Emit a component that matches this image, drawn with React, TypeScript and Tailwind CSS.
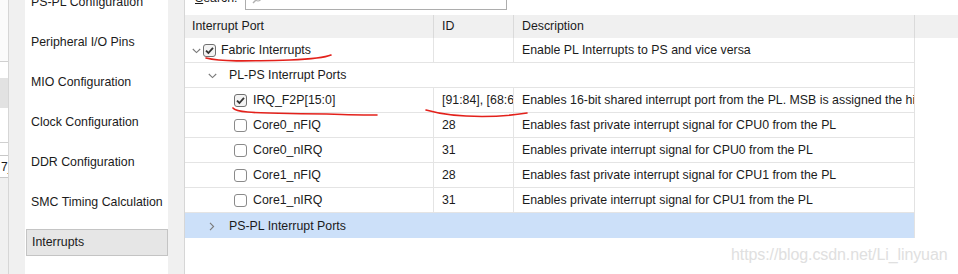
import React from "react";

const ChevDown = () => (
  <svg width="9" height="6" viewBox="0 0 9 6" className="shrink-0">
    <path d="M0.8 1 L4.5 4.6 L8.2 1" fill="none" stroke="#7a7a7a" strokeWidth="1.1" />
  </svg>
);

const ChevRight = () => (
  <svg width="6" height="9" viewBox="0 0 6 9" className="shrink-0">
    <path d="M1 0.8 L4.6 4.5 L1 8.2" fill="none" stroke="#7a7a7a" strokeWidth="1.1" />
  </svg>
);

const Check = ({ on }: { on: boolean }) => (
  <div
    className={`w-[13px] h-[13px] shrink-0 rounded-[3px] border flex items-center justify-center ${
      on ? "border-[#707070] bg-[#f3f3f3]" : "border-[#8a8a8a] bg-white"
    }`}
  >
    {on && (
      <svg width="11" height="11" viewBox="0 0 11 11">
        <path d="M2 5.6 L4.4 8 L9 2.8" fill="none" stroke="#333" strokeWidth="1.8" />
      </svg>
    )}
  </div>
);

const side = [
  "PS-PL Configuration",
  "Peripheral I/O Pins",
  "MIO Configuration",
  "Clock Configuration",
  "DDR Configuration",
  "SMC Timing Calculation",
  "Interrupts",
];

const leaves = [
  { name: "IRQ_F2P[15:0]", on: true, id: "[91:84], [68:61]", desc: "Enables 16-bit shared interrupt port from the PL. MSB is assigned the highest ID" },
  { name: "Core0_nFIQ", on: false, id: "28", desc: "Enables fast private interrupt signal for CPU0 from the PL" },
  { name: "Core0_nIRQ", on: false, id: "31", desc: "Enables private interrupt signal for CPU0 from the PL" },
  { name: "Core1_nFIQ", on: false, id: "28", desc: "Enables fast private interrupt signal for CPU1 from the PL" },
  { name: "Core1_nIRQ", on: false, id: "31", desc: "Enables private interrupt signal for CPU1 from the PL" },
];

export default function App() {
  return (
    <div className="relative w-[958px] h-[274px] overflow-hidden bg-white flex font-['Liberation_Sans',Arial,sans-serif] text-[12.35px] text-[#1b1b1b]">
      {/* far-left strip */}
      <div className="w-[9px] shrink-0 flex flex-col bg-[#fafafa] border-r border-[#d6d6d6]">
        <div className="h-[62px] bg-[#fbfbfb] border-b border-[#d0d0d0]" />
        <div className="h-[16px] bg-white" />
        <div className="h-[30px] bg-[#e2e2e2]" />
        <div className="h-[35px] bg-white border-b border-[#d0d0d0]" />
        <div className="h-[12px] bg-white" />
        <div className="h-[23px] bg-white border-y border-[#c8c8c8] flex items-center pl-[1px] leading-none text-[12px] overflow-hidden whitespace-nowrap">7_</div>
        <div className="flex-1 bg-[#f0f0f0]" />
      </div>
      <div className="w-[16px] shrink-0 bg-[#f0f0f0]" />

      {/* sidebar */}
      <div className="w-[143px] shrink-0 bg-white flex flex-col pl-[1px] mt-[-18px]">
        {side.map((s) => (
          <div key={s} className="h-[40px] shrink-0 flex items-center">
            <div
              className={`h-[27px] w-full flex items-center pl-[5px] whitespace-nowrap ${
                s === "Interrupts" ? "bg-[#e6e6e6] border border-[#c4c4c4] pl-[4px]" : ""
              }`}
            >
              {s}
            </div>
          </div>
        ))}
      </div>
      <div className="w-[17px] shrink-0 bg-[#f0f0f0] border-r border-[#d6d6d6]" />

      {/* table area */}
      <div className="flex-1 flex flex-col min-w-0">
        <div className="h-[15px] shrink-0 flex items-start">
          <div className="ml-[10px] mt-[-8px] w-[50px] leading-none">
            <span className="underline">S</span>earch:
          </div>
          <div className="mt-[-14px] h-[24px] w-[262px] border border-[#adadad] bg-white flex items-end pl-[6px] pb-[5px]">
            <svg width="10" height="10" viewBox="0 0 10 10">
              <circle cx="6" cy="4" r="3" fill="none" stroke="#b0b0b0" strokeWidth="1.2" />
              <path d="M3.8 6.2 L1 9" stroke="#b0b0b0" strokeWidth="1.4" />
            </svg>
          </div>
        </div>

        {/* header */}
        <div className="h-[23px] shrink-0 flex bg-[#f0f0f0]">
          <div className="w-[249px] shrink-0 pl-[7px] flex items-center border-r border-[#dadada]">Interrupt Port</div>
          <div className="w-[80px] shrink-0 pl-[8px] flex items-center border-r border-[#dadada]">ID</div>
          <div className="w-[401px] shrink-0 pl-[8px] flex items-center border-r border-[#dadada]">Description</div>
          <div className="flex-1" />
        </div>

        {/* rows */}
        <div className="w-[730px] flex flex-col border-r border-[#e2e2e2]">
          <div className="h-[25px] flex border-b border-[#e4e4e4]">
            <div className="w-[249px] shrink-0 flex items-center pl-[7px] pt-[1px] border-r border-[#e4e4e4]">
              <ChevDown />
              <div className="ml-[2px]"><Check on={true} /></div>
              <span className="ml-[5px] whitespace-nowrap">Fabric Interrupts</span>
            </div>
            <div className="w-[80px] shrink-0 border-r border-[#e4e4e4]" />
            <div className="flex-1 flex items-center pl-[8px] pt-[1px] whitespace-nowrap overflow-hidden">Enable PL Interrupts to PS and vice versa</div>
          </div>

          <div className="h-[25px] flex items-center border-b border-[#e4e4e4] pl-[23px] pt-[1px]">
            <ChevDown />
            <span className="ml-[12px] whitespace-nowrap">PL-PS Interrupt Ports</span>
          </div>

          {leaves.map((l) => (
            <div key={l.name} className="h-[25px] flex border-b border-[#e4e4e4]">
              <div className="w-[249px] shrink-0 flex items-center pl-[49px] pt-[1px] border-r border-[#e4e4e4]">
                <Check on={l.on} />
                <span className="ml-[6px] whitespace-nowrap">{l.name}</span>
              </div>
              <div className="w-[80px] shrink-0 flex items-center pl-[8px] pt-[1px] border-r border-[#e4e4e4] overflow-hidden whitespace-nowrap">{l.id}</div>
              <div className="flex-1 min-w-0 flex items-center pl-[8px] pt-[1px] whitespace-nowrap overflow-hidden">{l.desc}</div>
            </div>
          ))}

          <div className="h-[25px] flex items-center bg-[#cce0f9] pl-[24px] pt-[1px]">
            <ChevRight />
            <span className="ml-[14px] whitespace-nowrap">PS-PL Interrupt Ports</span>
          </div>
        </div>
        <div className="flex-1" />
      </div>

      {/* red hand-drawn annotations */}
      <svg className="absolute inset-0 pointer-events-none" width="958" height="274" viewBox="0 0 958 274">
        <path d="M206 58 C 222 62, 250 61, 290 60 C 312 59, 324 58, 331 55" fill="none" stroke="#e3211b" strokeWidth="1.6" strokeLinecap="round" />
        <path d="M233 108 C 236 112, 250 113, 290 113.5 C 330 114, 360 115, 377 115" fill="none" stroke="#e3211b" strokeWidth="1.6" strokeLinecap="round" />
        <path d="M426 110 C 440 114, 462 116.5, 482 116.5 C 500 116.5, 515 115, 527 113" fill="none" stroke="#e3211b" strokeWidth="1.6" strokeLinecap="round" />
      </svg>

      {/* watermark */}
      <div className="absolute left-[731px] top-[247px] text-[16px] leading-none text-[#e0e0e0] whitespace-nowrap tracking-[-0.1px]">
        https://blog.csdn.net/Li_linyuan
      </div>
    </div>
  );
}
